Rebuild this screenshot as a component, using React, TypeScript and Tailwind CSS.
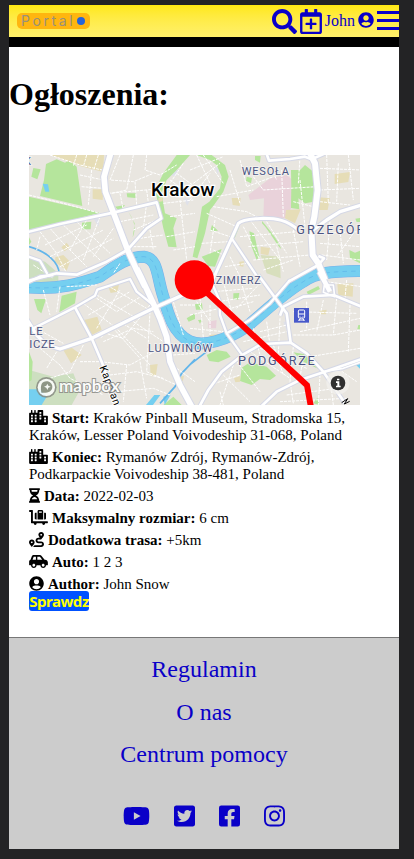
import React from "react";
import {
  FaSearch, FaRegCalendarPlus, FaUserCircle, FaCity, FaHourglassHalf, FaLuggageCart,
  FaRoute, FaCarSide, FaYoutube, FaTwitterSquare, FaFacebookSquare, FaInstagram,
} from "react-icons/fa";

type Sheet = { x: number; y: number; roads: [string, number][]; streets: string; green: string; tan: string };

// The map is split into four sheets, each with its own origin.
const sheets: Sheet[] = [
  {
    x: 60, y: 450,
    roads: [
      ["M272 10L252 80L256 125L285 200L325 305L350 360L375 410", 17],
      ["M20 247L120 222L280 188L410 157L424 205L380 235L322 300L260 335L170 374L110 370L20 394", 8],
      ["M20 318L60 332L82 372", 7],
    ],
    streets: "M27 135L130 160L240 190M90 15L180 45L255 62M170 15L160 48M200 15L190 50M235 15L222 58M180 75L250 90M185 110L250 115M215 60L205 165M300 15L270 90L340 95L400 70M340 15L320 120L275 130M380 15L375 60L420 75L470 45M265 130L400 118M300 130L310 180M345 95L350 165M380 120L385 158M430 160L520 150M450 90L520 140M470 70L525 110M490 40L450 100M480 150L500 330M450 200L525 190M440 260L525 245M460 300L525 290M300 215L400 195M340 240L410 210M380 160L370 235M60 245L110 310L140 370M90 235L130 280L200 350M130 225L240 330M170 215L270 310M75 285L200 225M90 320L250 240M120 350L280 265M60 260L50 300M200 210L150 300M240 200L190 330M280 235L220 320M300 340L280 370M340 290L410 290M360 265L430 255M390 240L400 300M40 345L100 385",
    green: "M110 28L135 38L148 30L170 50L187 168L60 138L72 90L78 42ZM27 140L240 188L27 242ZM40 54L62 58L52 88L34 80ZM186 218L214 215L212 238L186 238ZM320 130L348 130L346 144L322 142ZM27 262L34 275L27 285ZM285 170L315 165L300 185ZM325 185C350 220 345 245 338 262L344 220ZM470 15L510 15L470 60L440 90L425 130L435 190L470 205L460 235L470 292L445 290L430 235L412 150L405 120L430 70ZM296 330L320 315L312 332Z",
    tan: "M92 15L252 15L250 66L180 48ZM218 118L250 118L248 150L218 146ZM124 292L140 278L150 292L134 304ZM106 322L130 315L150 335L140 362L105 335ZM415 145L428 142L428 154L415 156Z",
  },
  {
    x: 570, y: 450,
    roads: [
      ["M230 12L237 32L300 27L345 20L365 28L405 10", 8],
      ["M360 10L375 40L383 120L373 200L364 240L368 315L385 340L405 390", 18],
      ["M68 390L125 265L145 220C160 205 200 206 220 205C260 205 290 210 325 240", 9],
      ["M125 265L205 385", 7],
      ["M295 395L385 345L402 325L385 318", 8],
      ["M370 240L410 210L450 185L515 165", 10],
    ],
    streets: "M0 60L100 20M10 100L90 40M20 15L60 100M40 15L100 100M0 150L60 70M70 170L170 185L220 210M80 140L190 120M120 60L150 160M150 30L170 110L250 80M190 80L220 120L380 110M240 45L260 90M275 60L280 200M330 20L325 100M330 90L345 230M310 155L370 170M390 55L515 60M410 15L415 160M445 40L440 155M475 15L490 150M390 120L510 115M390 155L480 165M50 190L140 230M60 240L120 260M35 280L115 275M70 300L100 315M75 210L60 310M160 230L210 330M180 210L270 330M230 215L290 310M150 260L320 245M175 290L340 275M190 330L360 315M220 360L310 330M260 290L280 365M310 240L330 350M385 250L515 245M390 280L510 290M420 215L410 330M450 240L460 340M490 250L440 320M395 315L510 330M120 320L150 380M105 350L170 340",
    green: "M20 15L65 15L105 45L116 80L100 125L72 165L60 180L45 250L22 325L8 320L28 220L36 170L58 155L90 115L95 80L80 45L60 30ZM303 60L330 60L345 45L370 65L372 155L345 160L325 145L328 178L303 174L304 110ZM170 80L186 84L183 100L168 92ZM195 18L212 18L210 38L195 30ZM178 244L192 250L208 320L200 330L185 290ZM216 213C240 240 270 280 274 298C260 285 240 245 216 220ZM35 320L95 297L75 350L55 348ZM66 225L84 242L60 244ZM496 206L512 204L512 216L500 216ZM478 300L495 308L510 302L510 340L480 325ZM130 255L145 225L148 230L134 265Z",
    tan: "M434 72L480 66L475 96L434 102ZM125 144L152 144L149 168L128 165ZM388 142L420 145L413 180L385 180ZM288 180L332 178L315 220L285 205ZM212 290L240 294L235 316L212 312ZM148 335L162 334L160 350L148 348Z",
  },
  {
    x: 60, y: 825,
    roads: [
      ["M350 -20L365 10L400 85L420 130L440 185L450 260L480 330L518 400", 17],
      ["M40 160L165 97L225 62L232 44L330 12L350 50L400 90", 7],
      ["M165 97L215 190L245 260L292 395", 8],
      ["M20 132L50 180L80 210L120 222L215 190L400 100L500 55", 10],
      ["M20 24L60 5L100 0", 8],
    ],
    streets: "M190 85L290 160L390 270M230 60L350 130M260 30L380 100M205 120L330 50M230 160L300 45M240 170L310 190L390 90M285 150L240 190M250 200L340 160L400 170M280 160L360 250M300 140L380 190M390 110L380 290L470 330M340 140L430 200M240 260L330 270L440 210M270 300L350 290L430 310M290 350L400 340L450 360M320 270L310 380M360 260L380 370M460 80L490 180M460 240L525 235M470 280L525 320M30 150L130 205M60 220L120 270L150 310L250 360M110 230L80 280M190 210L150 290L90 310M180 260L240 260M140 35L230 30M70 45L90 120M120 35L110 110M230 70L290 110L370 60M480 90L525 90",
    green: "M42 72L78 72L64 115L52 105ZM125 62L170 50L165 85L118 112ZM27 230L38 260L35 315L27 320ZM500 130L525 115L525 132L506 140ZM430 390L460 365L485 390Z",
    tan: "M192 135L232 125L245 165L215 180ZM130 225L155 218L185 240L153 265ZM390 270L413 267L408 300L392 304ZM266 38L298 25L292 50L272 54ZM480 305L492 302L488 320Z",
  },
  {
    x: 570, y: 825,
    roads: [
      ["M62 15L88 75L90 120L110 175L155 238", 7],
      ["M110 175L180 135L240 85L300 15", 7],
      ["M205 0L275 95L290 115L302 203", 8],
      ["M28 395L55 345L95 290L160 238L215 207L302 203L350 235L400 290L465 385", 8],
      ["M515 252L405 290L330 315L260 350L213 395", 8],
      ["M270 122L280 95L340 65L430 60L515 95", 8],
      ["M388 -10L420 50", 14], ["M430 30L434 65L400 52L403 30Z", 5], ["M400 290L460 280L515 260", 5],
    ],
    streets: "M70 50L190 40M85 80L210 60M90 110L190 80M100 20L130 130M150 10L180 110M210 25L140 100M20 80L60 140M0 120L90 100M0 160L100 170M30 70L40 190M60 90L60 180M160 200L290 170M190 160L210 240M230 140L240 210M270 130L265 240M210 170L290 150M180 230L300 310M140 260L210 350M100 300L180 380M60 330L150 300M90 350L100 390M130 270L90 390M210 220L350 280M250 210L280 300M310 215L300 320M340 240L330 310M360 245L510 220M310 180L430 180L510 165M330 170L420 150L510 130M350 80L350 160M400 75L380 170M440 70L430 180M480 90L475 230M310 110L500 115M300 320L310 385M350 310L355 390M390 300L385 390M290 360L440 340M270 380L470 370M420 310L430 390M410 20L515 35M470 15L465 70M435 275L500 320",
    green: "M130 55L148 54L145 74L130 72ZM15 88L36 85L38 104L18 104ZM50 240L80 225L110 230L122 245L85 262L58 258ZM155 278L180 262L230 275L258 302L240 315L210 312L185 330L150 318ZM350 50L385 33L390 42L355 60ZM310 232L370 242L386 282L340 260ZM370 385L382 368L388 390ZM505 150L515 150L515 166L502 162ZM28 55L38 48L34 62ZM24 135L36 134L30 146Z",
    tan: "M442 28L490 25L488 65L445 60ZM388 107L410 104L408 118L390 118ZM58 180L88 177L86 190L60 190ZM132 310L152 302L150 320L136 322Z",
  },
];

const Sheets = ({ draw }: { draw: (s: Sheet) => React.ReactNode }) => (
  <>{sheets.map((s, i) => <g key={i} transform={`translate(${s.x} ${s.y})`}>{draw(s)}</g>)}</>
);

const river =
  "M80 862C180 870 240 850 300 830C350 795 385 770 432 770C475 775 470 830 490 890C505 945 520 1000 570 1024C610 1042 680 1020 740 980C800 930 850 880 910 845C950 815 1000 815 1085 813";

function CityMap() {
  return (
    <svg viewBox="87 465 993 750" className="block h-[250px] w-[331px]" fill="none" fontFamily="'Roboto','Liberation Sans',sans-serif">
      <path d="M87 465h993v750H87z" fill="#e9e6e0" />
      <path d="M87 770L135 785L175 820L175 845L87 860ZM87 1110L160 1130L220 1120L240 1170L215 1215L87 1215Z" fill="#cddfc0" />
      <path d="M745 585L810 535L860 525L890 550L875 620L860 655L790 655L792 595L750 600Z" fill="#e9d2da" />
      <path d="M625 965L650 960L648 985L625 985Z" fill="#e9d2da" />
      <path d="M782 765L840 770L842 835L800 820Z" fill="#d8dfbd" />
      <path d="M515 505l20 6-8 18-18-4ZM550 595l22 2-10 20ZM645 500l12 6-4 18ZM280 655l18 0-2 26ZM850 965l12 0-2 28Z" fill="#dfe1ea" />
      <Sheets draw={(s) => <><path d={s.green} fill="#b5e59c" /><path d={s.tan} fill="#e6ddb7" /></>} />
      <path d={river} stroke="#79aeea" strokeWidth="36" />
      <path d={river} stroke="#75cff0" strokeWidth="33" />
      <path d={river} stroke="#5eb3e8" strokeWidth="2" strokeDasharray="14 12" />
      <path d="M87 1168L120 1168L140 1190L125 1215L87 1215ZM128 551l16 2 4 22-12 0ZM1065 1092l15-6 0 20ZM438 1215l25-30 18 0-22 30ZM490 1190l22-6-18 31Z" fill="#75cff0" />
      <path d="M87 740C140 755 176 785 178 822M585 1078L545 1120L525 1160L480 1210M570 1094L620 1055" stroke="#62b5ea" strokeWidth="5" />
      <Sheets draw={(s) => <path d={s.streets} stroke="#fff" strokeWidth="3" strokeDasharray="9 3" />} />
      <Sheets draw={(s) => s.roads.map(([d, w]) => <path key={d} d={d} stroke="#d5d8e6" strokeWidth={w + 6} strokeLinejoin="round" />)} />
      <Sheets draw={(s) => s.roads.map(([d, w]) => <path key={d} d={d} stroke="#fff" strokeWidth={w} strokeLinejoin="round" />)} />
      <g fill="#4b5482" stroke="#f4f2f0" strokeWidth="5" paintOrder="stroke">
        <text x="725" y="526" fontSize="33" textLength="142">WESOŁA</text>
        <text x="889" y="702" fontSize="38" textLength="204">GRZEGÓR</text>
        <text x="602" y="853" fontSize="32" textLength="180">KAZIMIERZ</text>
        <text x="444" y="1056" fontSize="33" textLength="193">LUDWINÓW</text>
        <text x="714" y="1094" fontSize="38" textLength="230">PODGÓRZE</text>
        <text x="88" y="1004" fontSize="34" textLength="40">LE</text>
        <text x="88" y="1043" fontSize="34" textLength="76">ICZE</text>
        <text x="73" y="496" fontSize="32">K</text>
      </g>
      <text x="453" y="587" fontSize="55" fontWeight="500" textLength="190" lengthAdjust="spacingAndGlyphs" fill="#000" stroke="#fff" strokeWidth="7" paintOrder="stroke">Krakow</text>
      <text transform="translate(298 1102) rotate(69)" fontSize="32" textLength="124" fill="#000" stroke="#fff" strokeWidth="5" paintOrder="stroke">Kapelan</text>
      <path d="M1025 1208l18-12-10 16 16-8" stroke="#000" strokeWidth="3" />
      <rect x="882" y="924" width="45" height="44" fill="#4758ca" />
      <g stroke="#fff" strokeWidth="3">
        <rect x="895" y="930" width="19" height="24" rx="3" />
        <path d="M895 942h19M899 949h2M908 949h2M896 963l5-8M913 963l-5-8M896 960h17" />
      </g>
      <path d="M619 876L921 1156L933 1222" stroke="#f00" strokeWidth="18" />
      <circle cx="583" cy="840" r="59" fill="#f00" />
      <g opacity=".85">
        <circle cx="139" cy="1162" r="31" fill="#888b82" />
        <circle cx="139" cy="1162" r="26" fill="#fff" />
        <path d="M124 1178C120 1155 125 1144 140 1144C150 1144 157 1152 157 1160C157 1175 142 1180 124 1178Z" fill="#858b7c" />
        <path d="M142 1151l3 6 7 3-7 3-3 7-3-7-7-3 7-3Z" fill="#fff" />
        <text x="177" y="1177" fontSize="50" fontFamily="Lato, sans-serif" fontWeight="700" textLength="182" lengthAdjust="spacingAndGlyphs" fill="#fff" stroke="#898a86" strokeWidth="6" paintOrder="stroke">mapbox</text>
      </g>
      <circle cx="1014" cy="1148" r="35" fill="#f2f1ee" opacity=".7" />
      <circle cx="1014" cy="1149" r="22" fill="#303030" />
      <path d="M1011 1136h7v5h-7zM1008 1144h10v13h4v5h-14v-5h4v-8h-4z" fill="#fff" />
    </svg>
  );
}

function Row({ icon, label, children }: { icon: React.ReactNode; label: string; children: React.ReactNode }) {
  return (
    <p className="leading-[17px]">
      <span className="mr-1 inline-block h-[15px] align-[-2px] [&>svg]:block [&>svg]:h-[15px]">{icon}</span>
      <b>{label}:</b> {children}
    </p>
  );
}

export default function App() {
  return (
    <div className="h-[859px] w-[414px] bg-[#232325] pt-[5px] pl-[9px] font-['Liberation_Serif',serif] text-black">
      <div className="flex h-[844px] w-[390px] flex-col overflow-hidden bg-white">
        <header className="flex h-[42px] shrink-0 items-start justify-between border-b-10 border-black bg-linear-to-b from-[#ffe80e] to-[#fff06a] pl-2 text-[#0a00c8]">
          <div className="mt-2 flex h-4 w-[73px] items-center rounded-[5px] bg-[#ffb60f] pl-1 font-[Inter,sans-serif] text-[14px] leading-4 text-[#99917b]">
            <span className="w-[57px] tracking-[2.6px]">Portal</span>
            <span className="-ml-px h-2 w-2 rounded-full bg-[#2563d9]" />
          </div>
          <div className="flex h-8 items-center">
            <FaSearch className="mr-[3px] h-[25px] w-[25px]" />
            <FaRegCalendarPlus className="mr-[3px] h-[25px] w-[22px]" />
            <span className="mr-[3px] text-[16px]">John</span>
            <FaUserCircle className="mr-[3px] mb-[2px] h-4 w-4" />
            <svg viewBox="0 0 22 22" className="mb-[2px] h-[22px] w-[22px]" fill="currentColor">
              <path d="M0 2h22v3H0zM0 10h22v3H0zM0 18h22v3H0z" />
            </svg>
          </div>
        </header>
        <main className="h-[590px] shrink-0">
          <h1 className="pt-[29px] text-[32px] leading-[37px] font-bold">Ogłoszenia:</h1>
          <section className="mt-[42px] ml-5 w-[331px] text-[15px]">
            <CityMap />
            <div className="flex flex-col gap-[5px] pt-[5px]">
              <Row icon={<FaCity className="w-[19px]" />} label="Start">Kraków Pinball Museum, Stradomska 15, Kraków, Lesser Poland Voivodeship 31-068, Poland</Row>
              <Row icon={<FaCity className="w-[19px]" />} label="Koniec">Rymanów Zdrój, Rymanów-Zdrój, Podkarpackie Voivodeship 38-481, Poland</Row>
              <Row icon={<FaHourglassHalf className="w-[11px]" />} label="Data">2022-02-03</Row>
              <Row icon={<FaLuggageCart className="w-[19px]" />} label="Maksymalny rozmiar">6 cm</Row>
              <Row icon={<FaRoute className="w-[15px]" />} label="Dodatkowa trasa">+5km</Row>
              <Row icon={<FaCarSide className="w-[19px]" />} label="Auto">1 2 3</Row>
              <Row icon={<FaUserCircle className="w-[15px]" />} label="Author">John Snow</Row>
            </div>
            <button className="-mt-[2px] block h-5 w-[60px] rounded-[3px] bg-[#0051ff] font-['Noto_Sans',sans-serif] text-[15px] leading-5 font-bold tracking-[-0.45px] whitespace-nowrap text-[#ff0]">Sprawdz</button>
          </section>
        </main>
        <footer className="flex h-[212px] shrink-0 flex-col items-center border-t border-[#777] bg-[#ccc] pt-[10px] text-[24px] leading-[42.5px] text-[#0a00c8]">
          <a>Regulamin</a>
          <a>O nas</a>
          <a>Centrum pomocy</a>
          <div className="mt-[28px] flex items-center gap-[24px]">
            <FaYoutube className="h-6 w-[27px]" />
            <FaTwitterSquare className="h-6 w-[21px]" />
            <FaFacebookSquare className="h-6 w-[21px]" />
            <FaInstagram className="h-6 w-[21px]" />
          </div>
        </footer>
      </div>
    </div>
  );
}
